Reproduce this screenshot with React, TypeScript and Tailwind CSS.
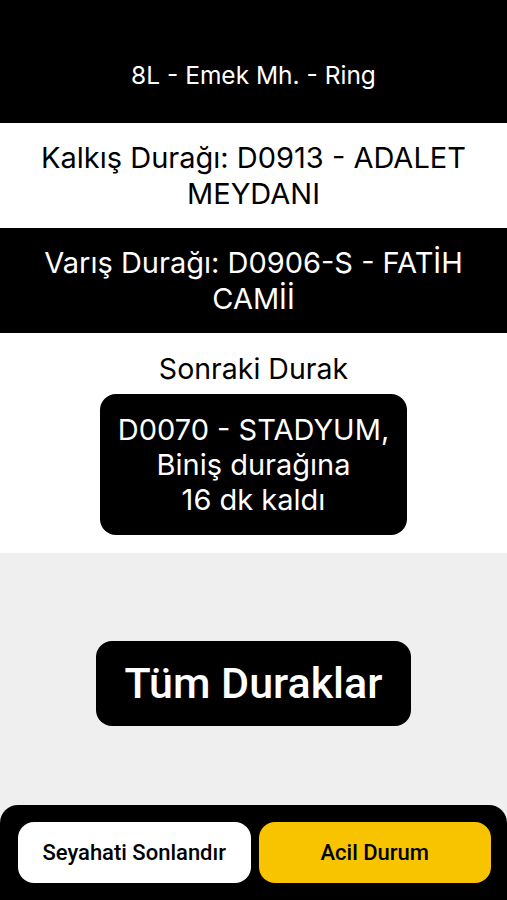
export default function App() {
  return (
    <div className="flex h-[900px] w-full flex-col overflow-hidden bg-[#efefef] font-['Inter',sans-serif]">
      {/* Route header */}
      <div className="flex h-[123px] shrink-0 items-center justify-center bg-black pt-[26px] text-white">
        <span className="text-[24.5px] leading-8">8L - Emek Mh. - Ring</span>
      </div>

      {/* Departure */}
      <div className="flex h-[105px] shrink-0 items-center justify-center bg-white px-5 text-center text-black">
        <span className="text-[29px] leading-9">Kalkış Durağı: D0913 - ADALET MEYDANI</span>
      </div>

      {/* Arrival */}
      <div className="flex h-[105px] shrink-0 items-center justify-center bg-black px-5 text-center text-white">
        <span className="text-[29px] leading-9">Varış Durağı: D0906-S - FATİH CAMİİ</span>
      </div>

      {/* Next stop */}
      <div className="flex h-[220px] shrink-0 flex-col items-center bg-white pt-[18px]">
        <span className="text-[28.5px] leading-9 text-black">Sonraki Durak</span>
        <div className="mt-[7px] flex h-[141px] w-[307px] flex-col items-center justify-center rounded-2xl bg-black text-center text-[29px] leading-[35px] text-white">
          <span>D0070 - STADYUM,</span>
          <span>Biniş durağına</span>
          <span>16 dk kaldı</span>
        </div>
      </div>

      {/* All stops */}
      <div className="flex flex-1 items-center justify-center pt-[9px] font-['Roboto',sans-serif]">
        <button className="flex h-[85px] w-[315px] items-center justify-center rounded-2xl bg-black text-[43px] font-medium text-white">
          Tüm Duraklar
        </button>
      </div>

      {/* Bottom actions */}
      <div className="flex h-[95px] shrink-0 items-center gap-2 rounded-t-[18px] bg-black pl-[18px] pr-4 font-['Roboto',sans-serif]">
        <button className="flex h-[61px] flex-1 items-center justify-center rounded-2xl bg-white text-[22px] font-medium text-black">
          Seyahati Sonlandır
        </button>
        <button className="flex h-[61px] flex-1 items-center justify-center rounded-2xl bg-[#f8c400] text-[22px] font-medium text-black">
          Acil Durum
        </button>
      </div>
    </div>
  );
}
